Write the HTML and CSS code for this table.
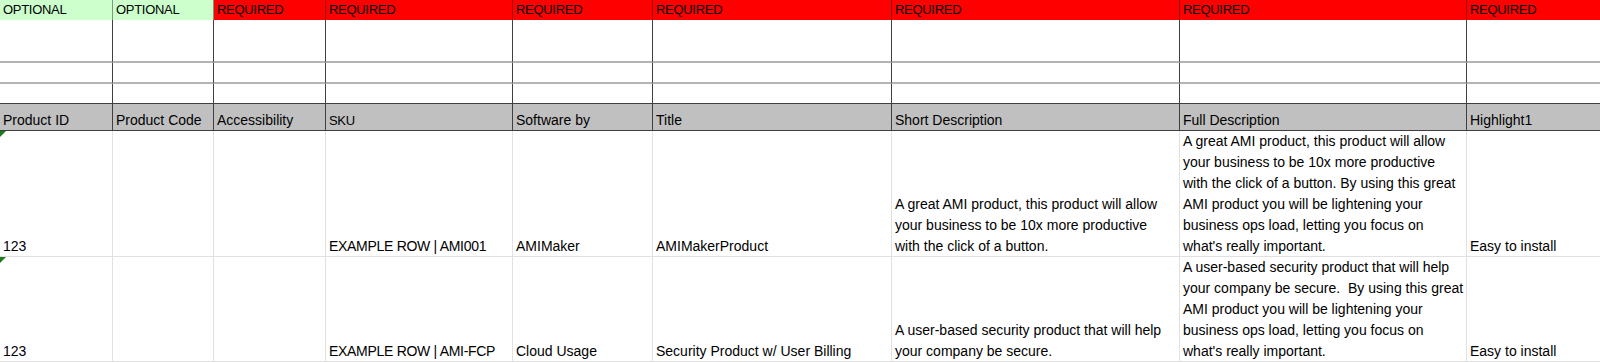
FILE: index.html
```html
<!DOCTYPE html>
<html lang="en">
<head>
<meta charset="utf-8">
<title>Product sheet</title>
<link rel="stylesheet" href="styles.css">
</head>
<body>
<div class="sheet">
  <div class="cell r1 opt"><span class="tx caps">OPTIONAL</span></div>
  <div class="cell r1 opt"><span class="tx caps">OPTIONAL</span></div>
  <div class="cell r1 req"><span class="tx caps">REQUIRED</span></div>
  <div class="cell r1 req"><span class="tx caps">REQUIRED</span></div>
  <div class="cell r1 req"><span class="tx caps">REQUIRED</span></div>
  <div class="cell r1 req"><span class="tx caps">REQUIRED</span></div>
  <div class="cell r1 req"><span class="tx caps">REQUIRED</span></div>
  <div class="cell r1 req"><span class="tx caps">REQUIRED</span></div>
  <div class="cell r1 req last"><span class="tx caps">REQUIRED</span></div>

  <div class="cell r2"></div><div class="cell r2"></div><div class="cell r2"></div>
  <div class="cell r2"></div><div class="cell r2"></div><div class="cell r2"></div>
  <div class="cell r2"></div><div class="cell r2"></div><div class="cell r2 last"></div>

  <div class="cell r3"></div><div class="cell r3"></div><div class="cell r3"></div>
  <div class="cell r3"></div><div class="cell r3"></div><div class="cell r3"></div>
  <div class="cell r3"></div><div class="cell r3"></div><div class="cell r3 last"></div>

  <div class="cell r4"></div><div class="cell r4"></div><div class="cell r4"></div>
  <div class="cell r4"></div><div class="cell r4"></div><div class="cell r4"></div>
  <div class="cell r4"></div><div class="cell r4"></div><div class="cell r4 last"></div>

  <div class="cell hd"><span class="tx">Product ID</span></div>
  <div class="cell hd"><span class="tx">Product Code</span></div>
  <div class="cell hd"><span class="tx">Accessibility</span></div>
  <div class="cell hd"><span class="tx caps">SKU</span></div>
  <div class="cell hd"><span class="tx">Software by</span></div>
  <div class="cell hd"><span class="tx">Title</span></div>
  <div class="cell hd"><span class="tx">Short Description</span></div>
  <div class="cell hd"><span class="tx">Full Description</span></div>
  <div class="cell hd last"><span class="tx">Highlight1</span></div>

  <div class="cell dt flag"><span class="tx">123</span></div>
  <div class="cell dt"></div>
  <div class="cell dt"></div>
  <div class="cell dt"><span class="tx sku">EXAMPLE ROW | AMI001</span></div>
  <div class="cell dt"><span class="tx">AMIMaker</span></div>
  <div class="cell dt"><span class="tx">AMIMakerProduct</span></div>
  <div class="cell dt"><span class="tx">A great AMI product, this product will allow<br>your business to be 10x more productive<br>with the click of a button.</span></div>
  <div class="cell dt"><span class="tx">A great AMI product, this product will allow<br>your business to be 10x more productive<br>with the click of a button. By using this great<br>AMI product you will be lightening your<br>business ops load, letting you focus on<br>what's really important.</span></div>
  <div class="cell dt last"><span class="tx">Easy to install</span></div>

  <div class="cell dt flag"><span class="tx">123</span></div>
  <div class="cell dt"></div>
  <div class="cell dt"></div>
  <div class="cell dt"><span class="tx sku">EXAMPLE ROW | AMI-FCP</span></div>
  <div class="cell dt"><span class="tx">Cloud Usage</span></div>
  <div class="cell dt"><span class="tx">Security Product w/ User Billing</span></div>
  <div class="cell dt"><span class="tx">A user-based security product that will help<br>your company be secure.</span></div>
  <div class="cell dt"><span class="tx">A user-based security product that will help<br>your company be secure.&nbsp; By using this great<br>AMI product you will be lightening your<br>business ops load, letting you focus on<br>what's really important.</span></div>
  <div class="cell dt last"><span class="tx">Easy to install</span></div>
</div>
</body>
</html>
```
FILE: styles.css
```css
html, body {
  margin: 0;
  padding: 0;
  background: #ffffff;
}

body {
  width: 1600px;
  height: 362px;
  overflow: hidden;
  font-family: "Liberation Sans", Arial, sans-serif;
  font-size: 14px;
  color: #000000;
}

.sheet {
  display: grid;
  grid-template-columns: 113px 101px 112px 187px 140px 239px 288px 287px 133px;
  grid-template-rows: 20px 43px 21px 20px 27px 126px 105px;
}

.cell {
  position: relative;
  box-sizing: border-box;
  display: flex;
  align-items: flex-end;
  padding: 0 3px 0 3px;
  line-height: 21px;
  white-space: nowrap;
  overflow: hidden;
  border-right: 1px solid #3f3f3f;
  background: #ffffff;
}

.tx {
  display: block;
  margin-bottom: -1px;
}

.tx.caps {
  font-size: 13px;
  letter-spacing: -0.3px;
}

.tx.sku {
  letter-spacing: -0.3px;
}

.r1 {
  border-right-color: rgba(0, 0, 0, 0.4);
}
.r1 .tx {
  margin-bottom: 0;
}
.opt {
  background: #ccffcc;
}
.req {
  background: #ff0000;
}

.r2 {
  border-bottom: 2px solid #b4b4b4;
}
.r3 {
  border-bottom: 2px solid #b4b4b4;
}
.r4 {
  border-bottom: 1px solid #3f3f3f;
}

.hd {
  background: #c0c0c0;
  border-bottom: 1px solid #3f3f3f;
}

.dt {
  border-right-color: #e1e1e1;
  border-bottom: 1px solid #e1e1e1;
}

.last {
  border-right: none;
}

.flag::before {
  content: "";
  position: absolute;
  top: 0;
  left: 0;
  width: 0;
  height: 0;
  border-top: 6px solid #1f7a1f;
  border-right: 6px solid transparent;
}
```
